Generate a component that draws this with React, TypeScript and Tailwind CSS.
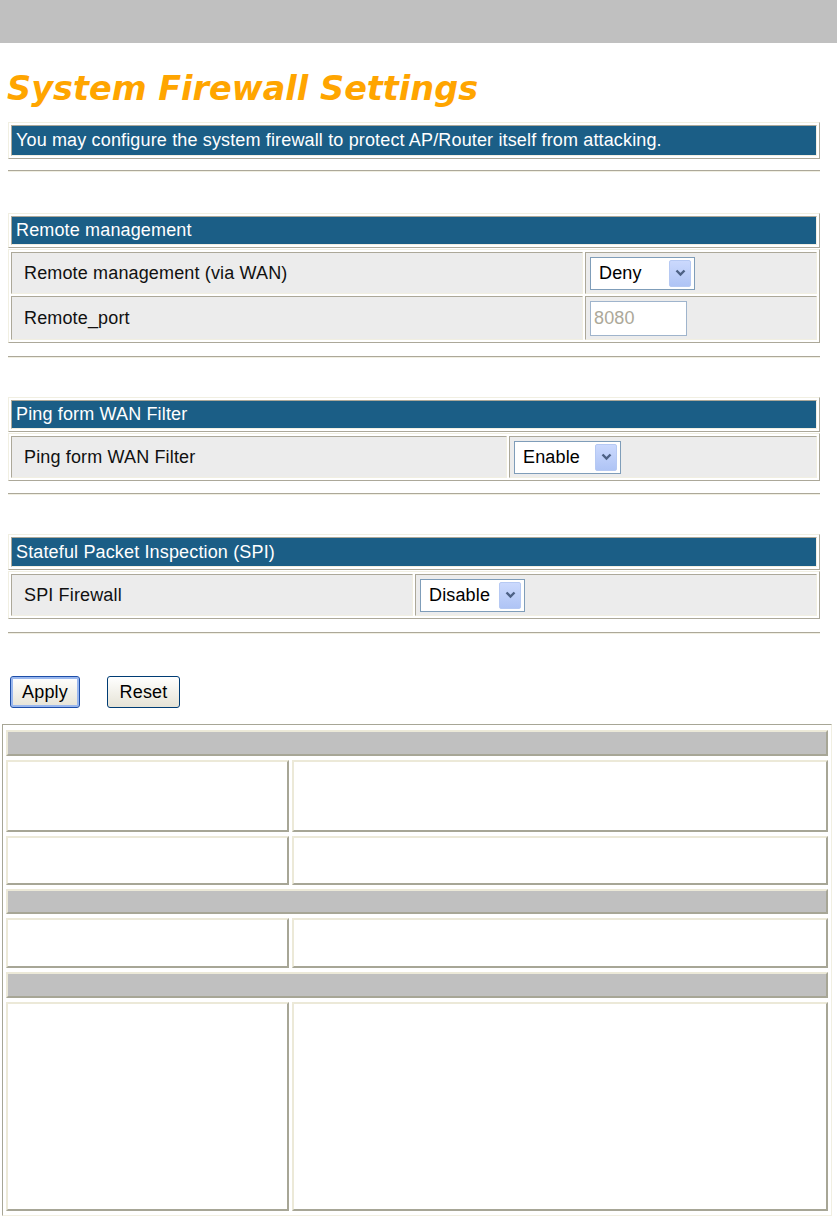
const OUT = "border border-t-[#f1efe2] border-l-[#f1efe2] border-r-[#aca899] border-b-[#aca899]";
const IN = "border border-t-[#aca899] border-l-[#aca899] border-r-[#f1efe2] border-b-[#f1efe2]";
const CELL = "border-2 border-t-[#ece9d8] border-l-[#ece9d8] border-r-[#a7a696] border-b-[#a7a696]";

function Arrow() {
	return (
		<div className="flex h-[27px] w-[22px] items-center justify-center rounded-[2px] border border-[#b6c9f3] bg-gradient-to-b from-[#cbd9fd] to-[#afc4f5]">
			<svg width="11" height="8" viewBox="0 0 11 8">
				<path d="M1.5 1.5 L5.5 5.5 L9.5 1.5" fill="none" stroke="#4d6185" strokeWidth="2.4" />
			</svg>
		</div>
	);
}

function XpSelect({ value, w }: { value: string; w: string }) {
	return (
		<div className={`flex h-[33px] items-center border border-[#7f9db9] bg-white pl-[8px] pr-[3px] ${w}`}>
			<span className="text-black">{value}</span>
			<div className="ml-auto">
				<Arrow />
			</div>
		</div>
	);
}

function HeaderTable({ text, h }: { text: string; h: string }) {
	return (
		<div className={`ml-[8px] w-[812px] bg-white p-[2px] ${OUT}`}>
			<div className={`flex items-center bg-[#1b5e86] pl-[4px] text-white ${h} ${IN}`}>{text}</div>
		</div>
	);
}

type Row = { label: string; control: React.ReactNode; h: string };

function BodyTable({ rows, leftW }: { rows: Row[]; leftW: string }) {
	return (
		<div className={`ml-[8px] mt-[1px] flex w-[812px] flex-col gap-[2px] bg-white p-[2px] ${OUT}`}>
			{rows.map((r) => (
				<div key={r.label} className={`flex gap-[2px] ${r.h}`}>
					<div className={`flex items-center bg-[#ececec] pl-[12px] text-[#111] ${leftW} ${IN}`}>{r.label}</div>
					<div className={`flex flex-1 items-center bg-[#ececec] pl-[4px] ${IN}`}>{r.control}</div>
				</div>
			))}
		</div>
	);
}

function Hr({ mt }: { mt: string }) {
	return <div className={`ml-[8px] w-[812px] border-t border-b border-t-[#aca899] border-b-[#f1efe2] ${mt}`} />;
}

export default function App() {
	return (
		<div className="relative h-[1217px] w-[837px] overflow-hidden bg-white font-['Liberation_Sans',Arial,sans-serif] text-[18px] leading-[21px] tracking-[0.15px]">
			<div className="h-[43px] bg-[#c0c0c0]" />

			<h1 className="mt-[27px] h-[38px] pl-[7px] font-['DejaVu_Sans',Verdana,sans-serif] text-[33.5px] font-bold italic leading-[38px] tracking-normal text-[#ffa500]">
				System Firewall Settings
			</h1>

			<div className={`ml-[8px] mt-[14px] w-[812px] bg-white p-[2px] ${OUT}`}>
				<div className={`flex h-[31px] items-center bg-[#1b5e86] pl-[4px] text-white ${IN}`}>
					You may configure the system firewall to protect AP/Router itself from attacking.
				</div>
			</div>
			<Hr mt="mt-[11px]" />

			{/* Remote management */}
			<div className="mt-[41px]">
				<HeaderTable text="Remote management" h="h-[29px]" />
				<BodyTable
					leftW="w-[572px]"
					rows={[
						{ label: "Remote management (via WAN)", control: <XpSelect value="Deny" w="w-[105px]" />, h: "h-[42px]" },
						{
							label: "Remote_port",
							control: (
								<div className="flex h-[35px] w-[97px] items-center border border-[#9fb4cc] bg-white pl-[3px] text-[#aca899]">8080</div>
							),
							h: "h-[44px]",
						},
					]}
				/>
			</div>
			<Hr mt="mt-[13px]" />

			{/* Ping */}
			<div className="mt-[39px]">
				<HeaderTable text="Ping form WAN Filter" h="h-[29px]" />
				<BodyTable
					leftW="w-[496px]"
					rows={[{ label: "Ping form WAN Filter", control: <XpSelect value="Enable" w="w-[107px]" />, h: "h-[42px]" }]}
				/>
			</div>
			<Hr mt="mt-[12px]" />

			{/* SPI */}
			<div className="mt-[39px]">
				<HeaderTable text="Stateful Packet Inspection (SPI)" h="h-[30px]" />
				<BodyTable
					leftW="w-[402px]"
					rows={[{ label: "SPI Firewall", control: <XpSelect value="Disable" w="w-[105px]" />, h: "h-[42px]" }]}
				/>
			</div>
			<Hr mt="mt-[13px]" />

			<div className="mt-[42px] flex gap-[27px] pl-[10px]">
				<button className="h-[32px] w-[70px] rounded-[3px] border border-[#1d4ea8] bg-gradient-to-b from-white to-[#e6e3d6] text-black shadow-[inset_0_0_0_2px_#9ab7ee]">
					Apply
				</button>
				<button className="h-[32px] w-[73px] rounded-[3px] border border-[#003c74] bg-gradient-to-b from-white to-[#e6e3d6] text-black">
					Reset
				</button>
			</div>

			<div className="ml-[2px] mt-[16px] flex w-[830px] flex-col gap-[4px] border border-t-[#a7a696] border-l-[#a7a696] border-r-[#f1efe2] border-b-[#f1efe2] px-[3px] pb-[4px] pt-[5px]">
				<div className={`h-[26px] bg-[#c0c0c0] ${CELL}`} />
				<div className="flex h-[72px] gap-[3px]">
					<div className={`w-[283px] bg-white ${CELL}`} />
					<div className={`flex-1 bg-white ${CELL}`} />
				</div>
				<div className="flex h-[49px] gap-[3px]">
					<div className={`w-[283px] bg-white ${CELL}`} />
					<div className={`flex-1 bg-white ${CELL}`} />
				</div>
				<div className={`h-[25px] bg-[#c0c0c0] ${CELL}`} />
				<div className="flex h-[50px] gap-[3px]">
					<div className={`w-[283px] bg-white ${CELL}`} />
					<div className={`flex-1 bg-white ${CELL}`} />
				</div>
				<div className={`h-[26px] bg-[#c0c0c0] ${CELL}`} />
				<div className="flex h-[209px] gap-[3px]">
					<div className={`w-[283px] bg-white ${CELL}`} />
					<div className={`flex-1 bg-white ${CELL}`} />
				</div>
			</div>
		</div>
	);
}
